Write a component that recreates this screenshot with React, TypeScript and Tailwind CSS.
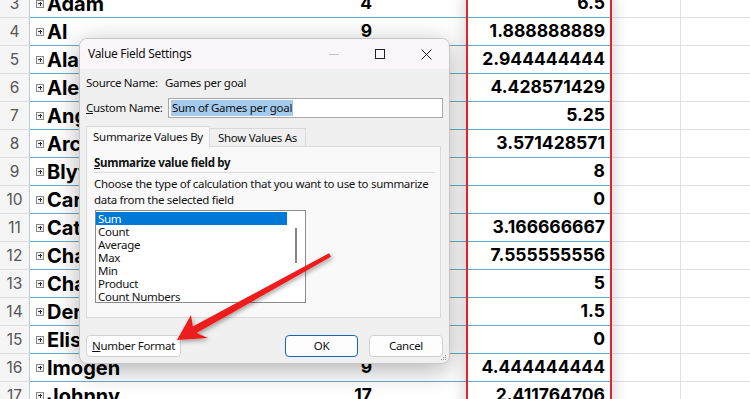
import React from "react";

type Row = { n: number; name: string; b: string; c: string };

const rows: Row[] = [
  { n: 3, name: "Adam", b: "4", c: "6.5" },
  { n: 4, name: "Al", b: "9", c: "1.888888889" },
  { n: 5, name: "Alan", b: "17", c: "2.944444444" },
  { n: 6, name: "Alex", b: "14", c: "4.428571429" },
  { n: 7, name: "Angus", b: "21", c: "5.25" },
  { n: 8, name: "Archie", b: "25", c: "3.571428571" },
  { n: 9, name: "Blythe", b: "8", c: "8" },
  { n: 10, name: "Carl", b: "1", c: "0" },
  { n: 11, name: "Cathy", b: "19", c: "3.166666667" },
  { n: 12, name: "Charlie", b: "68", c: "7.555555556" },
  { n: 13, name: "Chantelle", b: "5", c: "5" },
  { n: 14, name: "Derek", b: "3", c: "1.5" },
  { n: 15, name: "Elise", b: "1", c: "0" },
  { n: 16, name: "Imogen", b: "9", c: "4.444444444" },
  { n: 17, name: "Johnny", b: "17", c: "2.411764706" },
];

const calcTypes = ["Sum", "Count", "Average", "Max", "Min", "Product", "Count Numbers"];

function ExpandBox() {
  return (
    <span className="relative w-[8px] h-[8px] shrink-0 border border-[#8a8a8a] bg-[#f4f4f4]">
      <span className="absolute left-[1px] top-[2.5px] w-[4px] h-[1px] bg-[#333]" />
      <span className="absolute left-[2.5px] top-[1px] w-[1px] h-[4px] bg-[#333]" />
    </span>
  );
}

function SheetRow({ n, name, b, c }: Row) {
  return (
    <div className="flex h-[28px] font-['Inter',sans-serif]">
      <div className="w-[30px] shrink-0 bg-[#f5f5f5] border-r border-r-[#bfcbd3] border-b border-b-[#dcdcdc] flex items-center justify-center text-[15.5px] text-[#555]">
        {n}
      </div>
      <div className="w-[581px] shrink-0 flex border-b border-b-[#6aaccb] bg-white font-bold text-[20px] text-black">
        <div className="w-[170px] flex items-center pl-[6px] gap-[3px]">
          <ExpandBox />
          <span className="leading-none">{name}</span>
        </div>
        <div className="w-[178px] flex items-center justify-end pr-[6px] text-[17.5px]">{b}</div>
        <div className="flex-1 flex items-center justify-end pr-[6px] text-[17.5px]">{c}</div>
      </div>
      <div className="w-[70px] shrink-0 bg-white border-r border-r-[#e1e1e1] border-b border-b-[#e1e1e1]" />
      <div className="flex-1 bg-white border-b border-b-[#e1e1e1]" />
    </div>
  );
}

function Dialog() {
  return (
    <div className="absolute left-[79px] top-[38px] w-[371px] h-[326px] rounded-[8px] border border-[#c6c6c6] bg-[#f0f0f0] shadow-[0_6px_26px_rgba(0,0,0,0.3)] overflow-hidden font-['Noto_Sans',sans-serif] text-[11.5px] tracking-[-0.3px] text-[#111] whitespace-nowrap">
      <div className="flex items-center h-[30px] bg-[#fbf6fa]">
        <span className="pl-[8px] flex-1 text-[12px]">Value Field Settings</span>
        <div className="w-[46px] h-[30px] flex items-center justify-center">
          <span className="w-[10px] h-[1px] bg-[#c4c4c4]" />
        </div>
        <div className="w-[46px] h-[30px] flex items-center justify-center">
          <span className="w-[10px] h-[10px] border border-[#222]" />
        </div>
        <div className="w-[46px] h-[30px] flex items-center justify-center">
          <svg width="11" height="11" viewBox="0 0 11 11">
            <path d="M0.5 0.5 L10.5 10.5 M10.5 0.5 L0.5 10.5" stroke="#222" strokeWidth="1" />
          </svg>
        </div>
      </div>
      <div className="px-[6px]">
        <div className="flex items-center h-[20px] mt-[4px]">
          <span className="w-[79px] shrink-0">Source Name:</span>
          <span>Games per goal</span>
        </div>
        <div className="flex items-center h-[20px] mt-[5px]">
          <span className="w-[82px] shrink-0">
            <span className="underline">C</span>ustom Name:
          </span>
          <div className="flex-1 h-[20px] bg-white border border-[#a9a9a9] flex items-center pl-[2px]">
            <span className="bg-[#a3cbee] leading-[16px] px-[1px]">Sum of Games per goal</span>
          </div>
        </div>
        <div className="flex items-end h-[20px] mt-[8px] mr-[2px]">
          <div className="relative z-10 w-[124px] h-[21px] -mb-[1px] bg-[#f9f9f9] border border-[#dadada] border-b-0 flex items-center justify-center">
            Summarize Values By
          </div>
          <div className="w-[96px] h-[18px] bg-[#f0f0f0] border border-[#dadada] border-l-0 border-b-0 flex items-center justify-center">
            Show Values As
          </div>
        </div>
        <div className="h-[172px] mr-[2px] bg-[#f9f9f9] border border-[#dadada] pl-[7px] pr-[5px] pt-[8px]">
          <div className="h-[16px] flex items-center font-bold">
            <span className="underline">S</span>ummarize value field by
          </div>
          <div className="h-[1px] bg-[#dcdcdc] mt-[1px]" />
          <div className="mt-[3px] leading-[16px]">
            Choose the type of calculation that you want to use to summarize
            <br />
            data from the selected field
          </div>
          <div className="mt-[2px] ml-[1px] w-[211px] h-[93px] bg-white border border-[#8c8c8c] flex">
            <div className="w-[191px] pt-[1px]">
              {calcTypes.map((t, i) => (
                <div
                  key={t}
                  className={`h-[13px] leading-[13px] pl-[2px] ${i === 0 ? "bg-[#0078d7] text-white" : ""}`}
                >
                  {t}
                </div>
              ))}
            </div>
            <div className="flex-1 flex justify-center pt-[17px]">
              <span className="w-[2px] h-[35px] bg-[#888]" />
            </div>
          </div>
        </div>
        <div className="flex items-center mt-[17px]">
          <button className="w-[95px] h-[22px] rounded-[4px] border border-[#d2d2d2] bg-[#fdfdfd]">
            <span className="underline">N</span>umber Format
          </button>
          <div className="flex-1" />
          <button className="w-[73px] h-[22px] rounded-[4px] border border-[#1565b8] bg-[#fdfdfd]">OK</button>
          <button className="w-[74px] h-[22px] ml-[11px] rounded-[4px] border border-[#d2d2d2] bg-[#fdfdfd]">
            Cancel
          </button>
        </div>
      </div>
      <svg className="absolute right-[2px] bottom-[2px]" width="8" height="8" viewBox="0 0 8 8">
        <rect x="6" y="2" width="1" height="1" fill="#999" />
        <rect x="4" y="4" width="1" height="1" fill="#999" />
        <rect x="6" y="4" width="1" height="1" fill="#999" />
        <rect x="2" y="6" width="1" height="1" fill="#999" />
        <rect x="4" y="6" width="1" height="1" fill="#999" />
        <rect x="6" y="6" width="1" height="1" fill="#999" />
      </svg>
    </div>
  );
}

function Arrow() {
  return (
    <svg className="absolute left-0 top-0 pointer-events-none" width="750" height="399" viewBox="0 0 750 399">
      <defs>
        <filter id="arrowShadow" x="-20%" y="-20%" width="140%" height="140%">
          <feDropShadow dx="1.5" dy="2" stdDeviation="2" floodColor="#000" floodOpacity="0.35" />
        </filter>
      </defs>
      <polygon
        points="177,340 208,338 196.4,333.1 331,256.8 329,253.2 192.8,326.5 191,315"
        fill="#ee1a1a"
        filter="url(#arrowShadow)"
      />
    </svg>
  );
}

export default function App() {
  return (
    <div className="relative w-[750px] h-[399px] overflow-hidden bg-white">
      <div className="-mt-[10px]">
        {rows.map((r) => (
          <SheetRow key={r.n} {...r} />
        ))}
      </div>
      <div className="absolute left-[466px] -top-[10px] w-[146px] h-[430px] border-2 border-[#e3242b] shadow-[0_0_16px_rgba(0,0,0,0.2)]" />
      <Dialog />
      <Arrow />
    </div>
  );
}
